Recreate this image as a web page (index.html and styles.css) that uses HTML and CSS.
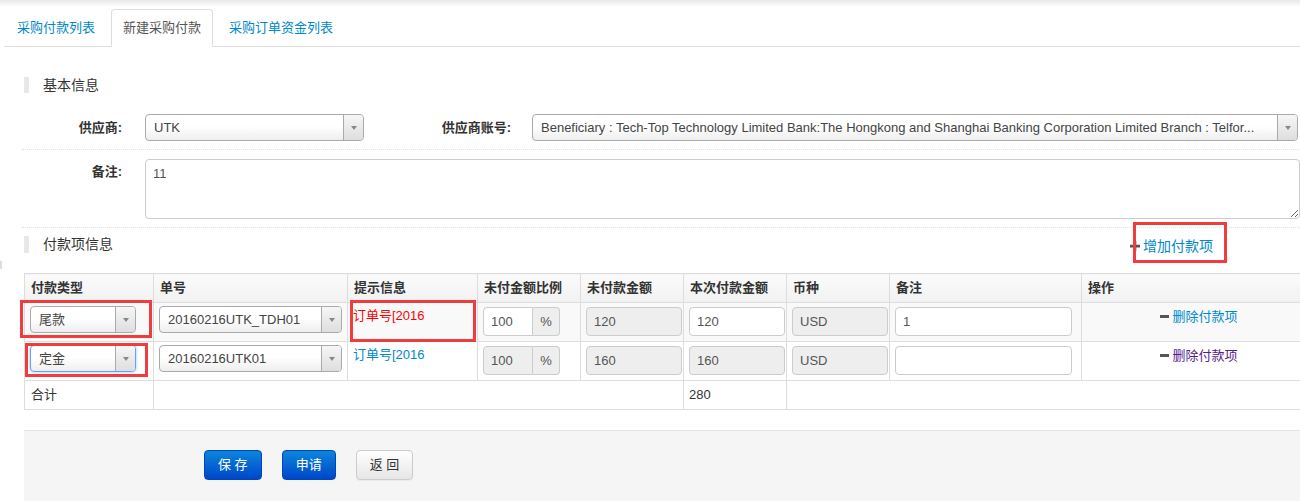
FILE: index.html
```html
<!DOCTYPE html>
<html lang="zh-CN">
<head>
<meta charset="utf-8">
<title>新建采购付款</title>
<link rel="stylesheet" href="styles.css">
</head>
<body>
<div class="topshade"></div>
<ul class="tabs">
  <li><a href="#">采购付款列表</a></li>
  <li class="active"><a href="#">新建采购付款</a></li>
  <li><a href="#">采购订单资金列表</a></li>
</ul>
<div class="content">
  <div class="section-title">基本信息</div>
  <div class="form-row first-row">
    <label class="ctl-label">供应商:</label>
    <div class="select sel-supplier"><span class="sel-text">UTK</span><span class="sel-arrow"><i></i></span></div>
    <label class="ctl-label lbl-account">供应商账号:</label>
    <div class="select sel-account"><span class="sel-text">Beneficiary : Tech-Top Technology Limited Bank:The Hongkong and Shanghai Banking Corporation Limited Branch : Telfor...</span><span class="sel-arrow"><i></i></span></div>
  </div>
  <div class="form-row row-remark">
    <label class="ctl-label lbl-remark">备注:</label>
    <textarea class="remark">11</textarea>
  </div>
  <div class="section-head">
    <div class="section-title">付款项信息</div>
    <a class="add-link" href="#"><svg width="10" height="10" viewBox="0 0 10 10"><path d="M0 3.8h10v2.6H0zM3.7 0h2.6v10H3.7z" fill="#555"/></svg>增加付款项</a>
  </div>
  <table class="items">
    <colgroup>
      <col class="c1"><col class="c2"><col class="c3"><col class="c4"><col class="c5"><col class="c6"><col class="c7"><col class="c8"><col class="c9">
    </colgroup>
    <thead>
      <tr><th>付款类型</th><th>单号</th><th>提示信息</th><th>未付金额比例</th><th>未付款金额</th><th>本次付款金额</th><th>币种</th><th>备注</th><th>操作</th></tr>
    </thead>
    <tbody>
      <tr class="odd">
        <td><div class="select sel-type"><span class="sel-text">尾款</span><span class="sel-arrow"><i></i></span></div></td>
        <td><div class="select sel-no"><span class="sel-text">20160216UTK_TDH01</span><span class="sel-arrow"><i></i></span></div></td>
        <td><span class="hint red">订单号[2016</span></td>
        <td><div class="ig"><div class="inp">100</div><div class="addon">%</div></div></td>
        <td><div class="inp dis w96">120</div></td>
        <td><div class="inp w96">120</div></td>
        <td><div class="inp dis w96">USD</div></td>
        <td><div class="inp w177">1</div></td>
        <td class="ops"><a class="del" href="#"><svg width="9" height="3" viewBox="0 0 9 3"><rect width="9" height="3" fill="#555"/></svg>删除付款项</a></td>
      </tr>
      <tr>
        <td><div class="select sel-type focus"><span class="sel-text">定金</span><span class="sel-arrow"><i></i></span></div></td>
        <td><div class="select sel-no"><span class="sel-text">20160216UTK01</span><span class="sel-arrow"><i></i></span></div></td>
        <td><span class="hint blue">订单号[2016</span></td>
        <td><div class="ig"><div class="inp dis">100</div><div class="addon">%</div></div></td>
        <td><div class="inp dis w96">160</div></td>
        <td><div class="inp dis w96">160</div></td>
        <td><div class="inp dis w96">USD</div></td>
        <td><div class="inp w177"></div></td>
        <td class="ops"><a class="del visited" href="#"><svg width="9" height="3" viewBox="0 0 9 3"><rect width="9" height="3" fill="#555"/></svg>删除付款项</a></td>
      </tr>
      <tr class="total">
        <td>合计</td>
        <td colspan="4"></td>
        <td>280</td>
        <td colspan="3"></td>
      </tr>
    </tbody>
  </table>
  <div class="actions">
    <button class="btn btn-primary">保 存</button>
    <button class="btn btn-primary">申请</button>
    <button class="btn btn-default">返 回</button>
  </div>
</div>
<div class="mark"></div>
<div class="annot a-add"></div>
<div class="annot a-type1"></div>
<div class="annot a-hint"></div>
<div class="annot a-type2"></div>
</body>
</html>
```
FILE: styles.css
```css
* { box-sizing: border-box; }
html, body { margin: 0; padding: 0; background: #fff; }
body {
  font-family: "Liberation Sans", "Noto Sans CJK SC", sans-serif;
  font-size: 13px;
  color: #333;
  width: 1300px;
  height: 501px;
  overflow: hidden;
  position: relative;
}
a { text-decoration: none; }

.topshade { height: 9px; background: linear-gradient(#e8e8e8, #fff 7px); }

.tabs {
  display: flex;
  list-style: none;
  margin: 0 0 0 4px;
  padding: 0 0 0 1px;
  border-bottom: 1px solid #ddd;
}
.tabs li { margin: 0 4px -1px 0; }
.tabs a {
  display: block;
  padding: 0 11px;
  line-height: 36px;
  border: 1px solid transparent;
  border-radius: 4px 4px 0 0;
  color: #0088cc;
  font-size: 13px;
}
.tabs .active a { border-color: #ddd #ddd transparent; background: #fff; color: #555; }

.content { padding-left: 24px; width: 1300px; }

.section-title {
  margin-top: 30px;
  border-left: 5px solid #e8e8e8;
  padding-left: 14px;
  height: 16px;
  line-height: 16px;
  font-size: 14px;
  color: #333;
}

.form-row {
  display: flex;
  align-items: center;
  margin-left: -2px;
  padding: 8px 0;
  border-bottom: 1px dotted #e2e2e2;
}
.first-row { margin-top: 13px; }
.row-remark { padding-top: 9px; align-items: flex-start; }
.ctl-label {
  width: 100px;
  margin-right: 23px;
  text-align: right;
  font-weight: bold;
  line-height: 18px;
  color: #333;
}
.lbl-account { width: 147px; margin-right: 21px; }
.lbl-remark { margin-top: 4px; }

.select {
  display: flex;
  height: 27px;
  border: 1px solid #aaa;
  border-radius: 4px;
  background: linear-gradient(#fff 0%, #fff 45%, #eee 100%);
  color: #444;
  overflow: hidden;
}
.sel-text {
  flex: 1;
  padding-left: 8px;
  line-height: 25px;
  white-space: nowrap;
  overflow: hidden;
}
.sel-arrow {
  width: 20px;
  border-left: 1px solid #aaa;
  background: linear-gradient(#f6f6f6, #dedede);
  display: flex;
  align-items: center;
  justify-content: center;
}
.sel-arrow i {
  width: 0; height: 0;
  border-left: 3px solid transparent;
  border-right: 3px solid transparent;
  border-top: 4px solid #888;
}
.sel-supplier { width: 219px; }
.sel-account { width: 766px; }
.sel-type { width: 106px; }
.sel-no { width: 183px; }
.select.focus { border-color: #6b9ff5; box-shadow: 0 0 3px rgba(82, 140, 236, .6); }

.remark {
  display: block;
  width: 1155px;
  height: 60px;
  border: 1px solid #ccc;
  border-radius: 4px;
  padding: 5px 7px;
  font: 13px/18px "Liberation Sans", "Noto Sans CJK SC", sans-serif;
  color: #555;
  resize: vertical;
}

.section-head { display: flex; align-items: flex-start; margin-top: 8px; height: 20px; }
.section-head .section-title { margin-top: 0; height: 17px; line-height: 17px; }
.add-link {
  margin-left: auto;
  margin-right: 87px;
  display: flex;
  align-items: center;
  font-size: 14px;
  line-height: 20px;
  color: #0088cc;
}
.add-link svg { margin-right: 3px; }

.items {
  border-collapse: collapse;
  table-layout: fixed;
  width: 1277px;
  margin-top: 17px;
}
.c1 { width: 129px; } .c2 { width: 194px; } .c3 { width: 130px; }
.c4, .c5, .c6, .c7 { width: 103px; }
.c8 { width: 192px; } .c9 { width: 220px; }
.items th, .items td {
  border: 1px solid #ddd;
  text-align: left;
  vertical-align: top;
  padding: 3px 5px 5px;
}
.items th {
  padding: 0 6px;
  line-height: 28px;
  font-weight: bold;
  color: #333;
  background: linear-gradient(#fbfbfb, #f1f1f1);
}
.items tr.odd td { background: #f9f9f9; }
.items tr.total td { padding: 0 6px; line-height: 28px; color: #333; }
.items tr.total td:nth-child(3) { padding-left: 5px; }

.hint { display: block; line-height: 20px; }
.hint.red { color: #f00; }
.hint.blue { color: #0088cc; }

.inp {
  margin-top: 1px;
  height: 29px;
  border: 1px solid #ccc;
  border-radius: 4px;
  padding: 0 7px;
  line-height: 27px;
  color: #555;
  background: #fff;
}
.inp.dis { background: #eee; }
.w96 { width: 96px; }
.w177 { width: 177px; }
.ig { display: flex; margin-top: 1px; height: 29px; }
.ig .inp { margin: 0; width: 50px; border-radius: 4px 0 0 4px; }
.ig .addon {
  width: 27px;
  border: 1px solid #ccc;
  border-left: 0;
  border-radius: 0 4px 4px 0;
  background: #eee;
  text-align: center;
  line-height: 27px;
  color: #555;
}

.items td.ops { text-align: center; padding-left: 20px; }
.del {
  display: inline-flex;
  align-items: center;
  line-height: 20px;
  color: #0088cc;
}
.del.visited { color: #551a8b; }
.del svg { margin-right: 3px; }

.actions {
  display: flex;
  gap: 20px;
  margin-top: 20px;
  border-top: 1px solid #e5e5e5;
  background: #f5f5f5;
  padding: 19px 0 0 180px;
  height: 71px;
}
.btn {
  height: 30px;
  padding: 0 13px;
  border-radius: 4px;
  font: 13px/28px "Liberation Sans", "Noto Sans CJK SC", sans-serif;
  border: 1px solid;
  cursor: pointer;
}
.btn-primary {
  color: #fff;
  background: linear-gradient(#0a86dc, #0046c9);
  border-color: #0046ba;
}
.btn-default {
  color: #333;
  background: linear-gradient(#fff, #e6e6e6);
  border-color: #ccc;
  box-shadow: 0 1px 1px rgba(0, 0, 0, .05);
}

.mark { position: absolute; left: 0; top: 261px; width: 2px; height: 8px; background: #ddd; }

.annot { position: absolute; border: 3px solid #f03c3c; }
.a-add { left: 1133px; top: 222px; width: 94px; height: 41px; }
.a-type1 { left: 20px; top: 300px; width: 132px; height: 38px; }
.a-hint { left: 350px; top: 300px; width: 126px; height: 42px; }
.a-type2 { left: 25px; top: 343px; width: 123px; height: 34px; }
```
